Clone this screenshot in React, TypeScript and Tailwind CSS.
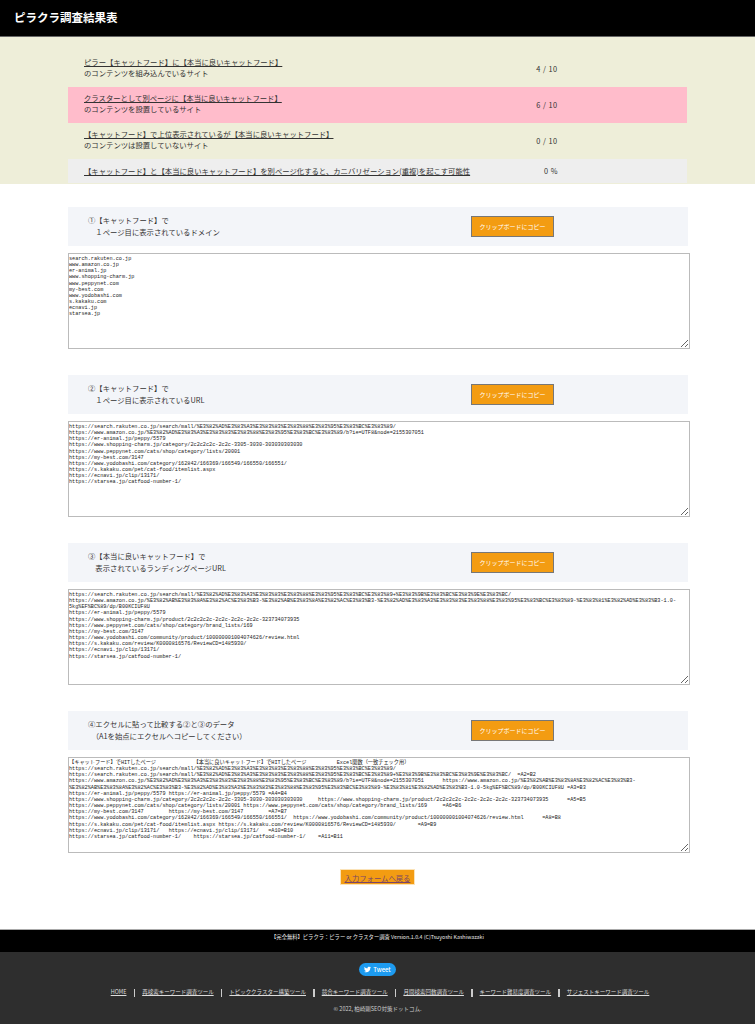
import { FaTwitter } from "react-icons/fa";

const KF = "%E3%82%AD%E3%83%A3%E3%83%83%E3%83%88%E3%83%95%E3%83%BC%E3%83%89";
const RAKUTEN = `https://search.rakuten.co.jp/search/mall/${KF}/`;
const RAKUTEN_2 = `https://search.rakuten.co.jp/search/mall/${KF}+%E3%83%9B%E3%83%BC%E3%83%9E%E3%83%BC/`;
const AMAZON = `https://www.amazon.co.jp/${KF}/b?ie=UTF8&node=2155307051`;
const AMAZON_2 =
  "https://www.amazon.co.jp/%E3%82%AB%E3%83%8A%E3%82%AC%E3%83%B3-%E3%82%AB%E3%83%8A%E3%82%AC%E3%83%B3-%E3%82%AD%E3%83%A3%E3%83%83%E3%83%88%E3%83%95%E3%83%BC%E3%83%89-%E3%83%81%E3%82%AD%E3%83%B3-1.0-5kg%EF%BC%89/dp/B00KCIUF8U";

const domains = [
  "search.rakuten.co.jp",
  "www.amazon.co.jp",
  "er-animal.jp",
  "www.shopping-charm.jp",
  "www.peppynet.com",
  "my-best.com",
  "www.yodobashi.com",
  "s.kakaku.com",
  "ecnavi.jp",
  "starsea.jp",
].join("\n");

const firstPage = [
  RAKUTEN,
  AMAZON,
  "https://er-animal.jp/peppy/5579",
  "https://www.shopping-charm.jp/category/2c2c2c2c-2c2c-3305-3030-303030303030",
  "https://www.peppynet.com/cats/shop/category/lists/20001",
  "https://my-best.com/3147",
  "https://www.yodobashi.com/category/162842/166369/166549/166550/166551/",
  "https://s.kakaku.com/pet/cat-food/itemlist.aspx",
  "https://ecnavi.jp/clip/13171/",
  "https://starsea.jp/catfood-number-1/",
];

const landing = [
  RAKUTEN_2,
  AMAZON_2,
  "https://er-animal.jp/peppy/5579",
  "https://www.shopping-charm.jp/product/2c2c2c2c-2c2c-2c2c-2c2c-323734073935",
  "https://www.peppynet.com/cats/shop/category/brand_lists/169",
  "https://my-best.com/3147",
  "https://www.yodobashi.com/community/product/100000001004074626/review.html",
  "https://s.kakaku.com/review/K0000816576/ReviewCD=1485930/",
  "https://ecnavi.jp/clip/13171/",
  "https://starsea.jp/catfood-number-1/",
];

const compare = [
  "【キャットフード】でHITしたページ\t\t【本当に良いキャットフード】でHITしたページ\t      Excel関数（一致チェック用）",
  ...firstPage.map((url, i) => `${url}\t${landing[i]}\t=A${i + 2}=B${i + 2}`),
].join("\n");

const summary = [
  { first: "ピラー【キャットフード】に【本当に良いキャットフード】", second: "のコンテンツを組み込んでいるサイト", value: "4 / 10", bg: "" },
  { first: "クラスターとして別ページに【本当に良いキャットフード】", second: "のコンテンツを設置しているサイト", value: "6 / 10", bg: "bg-[#ffbccb]" },
  { first: "【キャットフード】で上位表示されているが【本当に良いキャットフード】", second: "のコンテンツは設置していないサイト", value: "0 / 10", bg: "" },
];

const sections = [
  { title: "①【キャットフード】で", sub: "　１ページ目に表示されているドメイン", text: domains },
  { title: "②【キャットフード】で", sub: "　１ページ目に表示されているURL", text: firstPage.join("\n") },
  { title: "③【本当に良いキャットフード】で", sub: "　表示されているランディングページURL", text: landing.join("\n") },
  { title: "④エクセルに貼って比較する②と③のデータ", sub: "　（A1を始点にエクセルへコピーしてください）", text: compare },
];

const footerLinks = [
  "HOME",
  "再検索キーワード調査ツール",
  "トピッククラスター構築ツール",
  "競合キーワード調査ツール",
  "月間検索回数調査ツール",
  "キーワード難易度調査ツール",
  "サジェストキーワード調査ツール",
];

export default function App() {
  return (
    <div className="bg-white font-['Noto_Sans_CJK_JP',sans-serif] text-[#333] text-[7.35px] leading-[11px]">
      {/* Header */}
      <header className="h-[37px] bg-black border-b border-[#666] flex items-center pl-[14px] pb-[1px]">
        <h1 className="text-[11.5px] font-bold text-white">ピラクラ調査結果表</h1>
      </header>

      {/* Summary */}
      <section className="bg-[#eeeed9] pt-[14px] h-[147px]">
        <div className="mx-[68px] w-[619px]">
          {summary.map((row) => (
            <div key={row.value} className={`h-[36px] flex items-center pl-[16px] ${row.bg}`}>
              <div className="w-[440px] pb-[4px]">
                <a className="underline block">{row.first}</a>
                <p>{row.second}</p>
              </div>
              <div className="w-[46px] text-center tracking-[0.5px] pb-[2px]">{row.value}</div>
            </div>
          ))}
          <div className="h-[24px] flex items-center pl-[16px] pb-[2px] bg-[#eeeeee]">
            <a className="underline w-[444px] block">
              【キャットフード】と【本当に良いキャットフード】を別ページ化すると、カニバリゼーション(重複)を起こす可能性
            </a>
            <div className="w-[46px] text-center tracking-[0.5px]">0 %</div>
          </div>
        </div>
      </section>

      {/* Result lists */}
      <main className="pl-[68px] pt-[23px]">
        {sections.map((s) => (
          <section key={s.title} className="mb-[26px] w-[622px]">
            <div className="w-[620px] h-[39px] bg-[#f3f5f9] flex items-center justify-between pl-[20px] pr-[134px]">
              <div className="leading-[12px] pb-[1px]">
                <p>{s.title}</p>
                <p>{s.sub}</p>
              </div>
              <button className="w-[83px] h-[21px] bg-[#f39c12] border border-[#777] text-white text-[6px]">
                クリップボードにコピー
              </button>
            </div>
            <textarea
              readOnly
              defaultValue={s.text}
              className="block mt-[7px] w-[622px] h-[96px] border border-[#bbb] px-0 py-[2px] font-['Liberation_Mono','Noto_Sans_CJK_JP',monospace] text-[5.2px] leading-[6.15px] text-[#222] outline-none [tab-size:8]"
            />
          </section>
        ))}
      </main>

      <div className="flex justify-center -mt-[10px] mb-[44px]">
        <a className="w-[75px] h-[16px] flex items-center justify-center bg-[#f39c12] border border-[#fbe3b8] underline text-[#7a4568]">
          入力フォームへ戻る
        </a>
      </div>

      {/* Footer */}
      <footer className="text-center">
        <div className="h-[23px] bg-black border-t border-[#aaa] pt-[2px] text-[5.3px] text-[#e8e8e8]">
          【完全無料】ピラクラ：ピラー or クラスター調査 Version.1.0.4 (C)Tsuyoshi Kashiwazaki
        </div>
        <div className="h-[72px] bg-[#2e2e2e] pt-[11px] text-[5.5px] text-[#ddd]">
          <a className="mx-auto w-[37px] h-[13px] rounded-full bg-[#1d9bf0] flex items-center justify-center gap-[2px] text-white text-[6px] font-medium">
            <FaTwitter className="w-[7px] h-[7px]" />
            Tweet
          </a>
          <nav className="mt-[11px] flex justify-center items-center pl-[5px]">
            {footerLinks.map((label, i) => (
              <div key={label} className="flex items-center">
                {i > 0 && <span className="w-[1.5px] h-[8px] bg-[#ccc] mx-[7.1px]" />}
                <a className="underline">{label}</a>
              </div>
            ))}
          </nav>
          <p className="mt-[6px] text-[#ccc]">© 2022, 柏崎剛SEO対策ドットコム.</p>
        </div>
      </footer>
    </div>
  );
}
